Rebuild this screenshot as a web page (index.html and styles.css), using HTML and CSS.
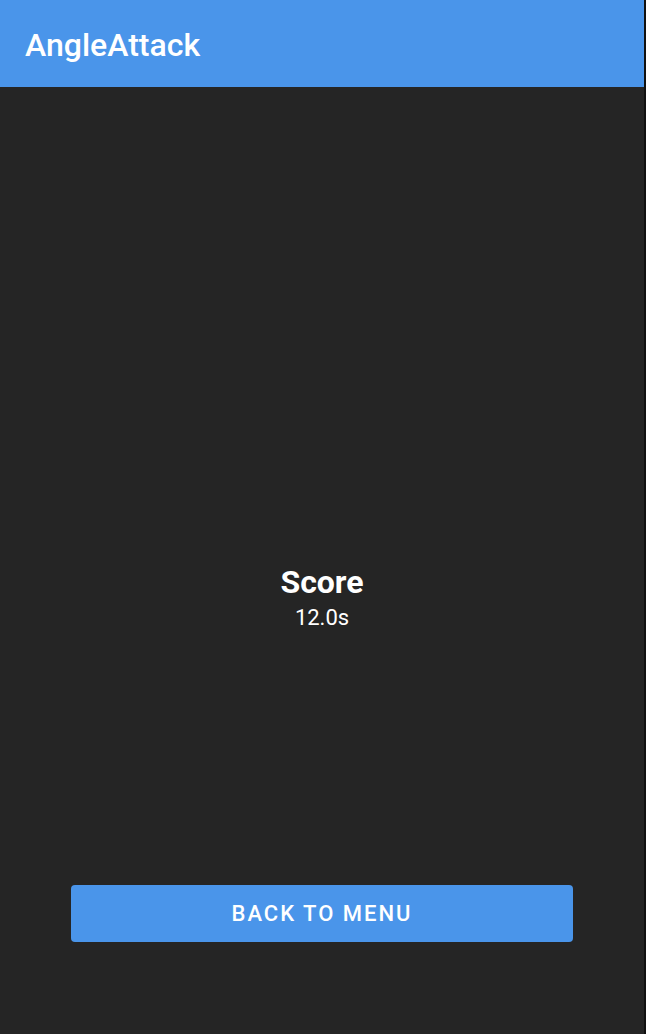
FILE: index.html
```html
<!DOCTYPE html>
<html>
<head>
<meta charset="utf-8">
<link rel="stylesheet" href="styles.css">
</head>
<body>
<div class="app">
  <header class="appbar"><h1 class="title">AngleAttack</h1></header>
  <main class="content">
    <section class="result">
      <div class="score-label">Score</div>
      <div class="score-value">12.0s</div>
    </section>
    <div class="actions">
      <button class="btn">BACK TO MENU</button>
    </div>
  </main>
</div>
</body>
</html>
```
FILE: styles.css
```css
* { box-sizing: border-box; }
html, body { margin: 0; padding: 0; height: 100%; }
body {
  background: #111111;
  font-family: Roboto, "Noto Sans", sans-serif;
  color: #ffffff;
}
.app {
  width: calc(100% - 2px);
  height: 100%;
  background: #252525;
  display: flex;
  flex-direction: column;
}
.appbar {
  height: 87px;
  background: #4a95ea;
  display: flex;
  align-items: center;
  padding-left: 25px;
  padding-top: 2px;
  flex-shrink: 0;
}
.title {
  margin: 0;
  font-size: 32px;
  font-weight: 500;
  line-height: 1;
}
.content {
  flex: 1;
  display: flex;
  flex-direction: column;
}
.result {
  flex: 1;
  display: flex;
  flex-direction: column;
  align-items: center;
  justify-content: flex-start;
  padding-top: 476px;
}
.score-label {
  font-size: 32px;
  font-weight: 700;
  line-height: 38px;
}
.score-value {
  font-size: 22px;
  line-height: 28px;
  margin-top: 3px;
}
.actions {
  padding: 0 71px 92px 71px;
}
.btn {
  display: block;
  width: 100%;
  height: 57px;
  border: none;
  border-radius: 4px;
  background: #4a95ea;
  color: #ffffff;
  font-family: Roboto, "Noto Sans", sans-serif;
  font-size: 22px;
  font-weight: 500;
  letter-spacing: 2px;
  padding: 0;
}
```
